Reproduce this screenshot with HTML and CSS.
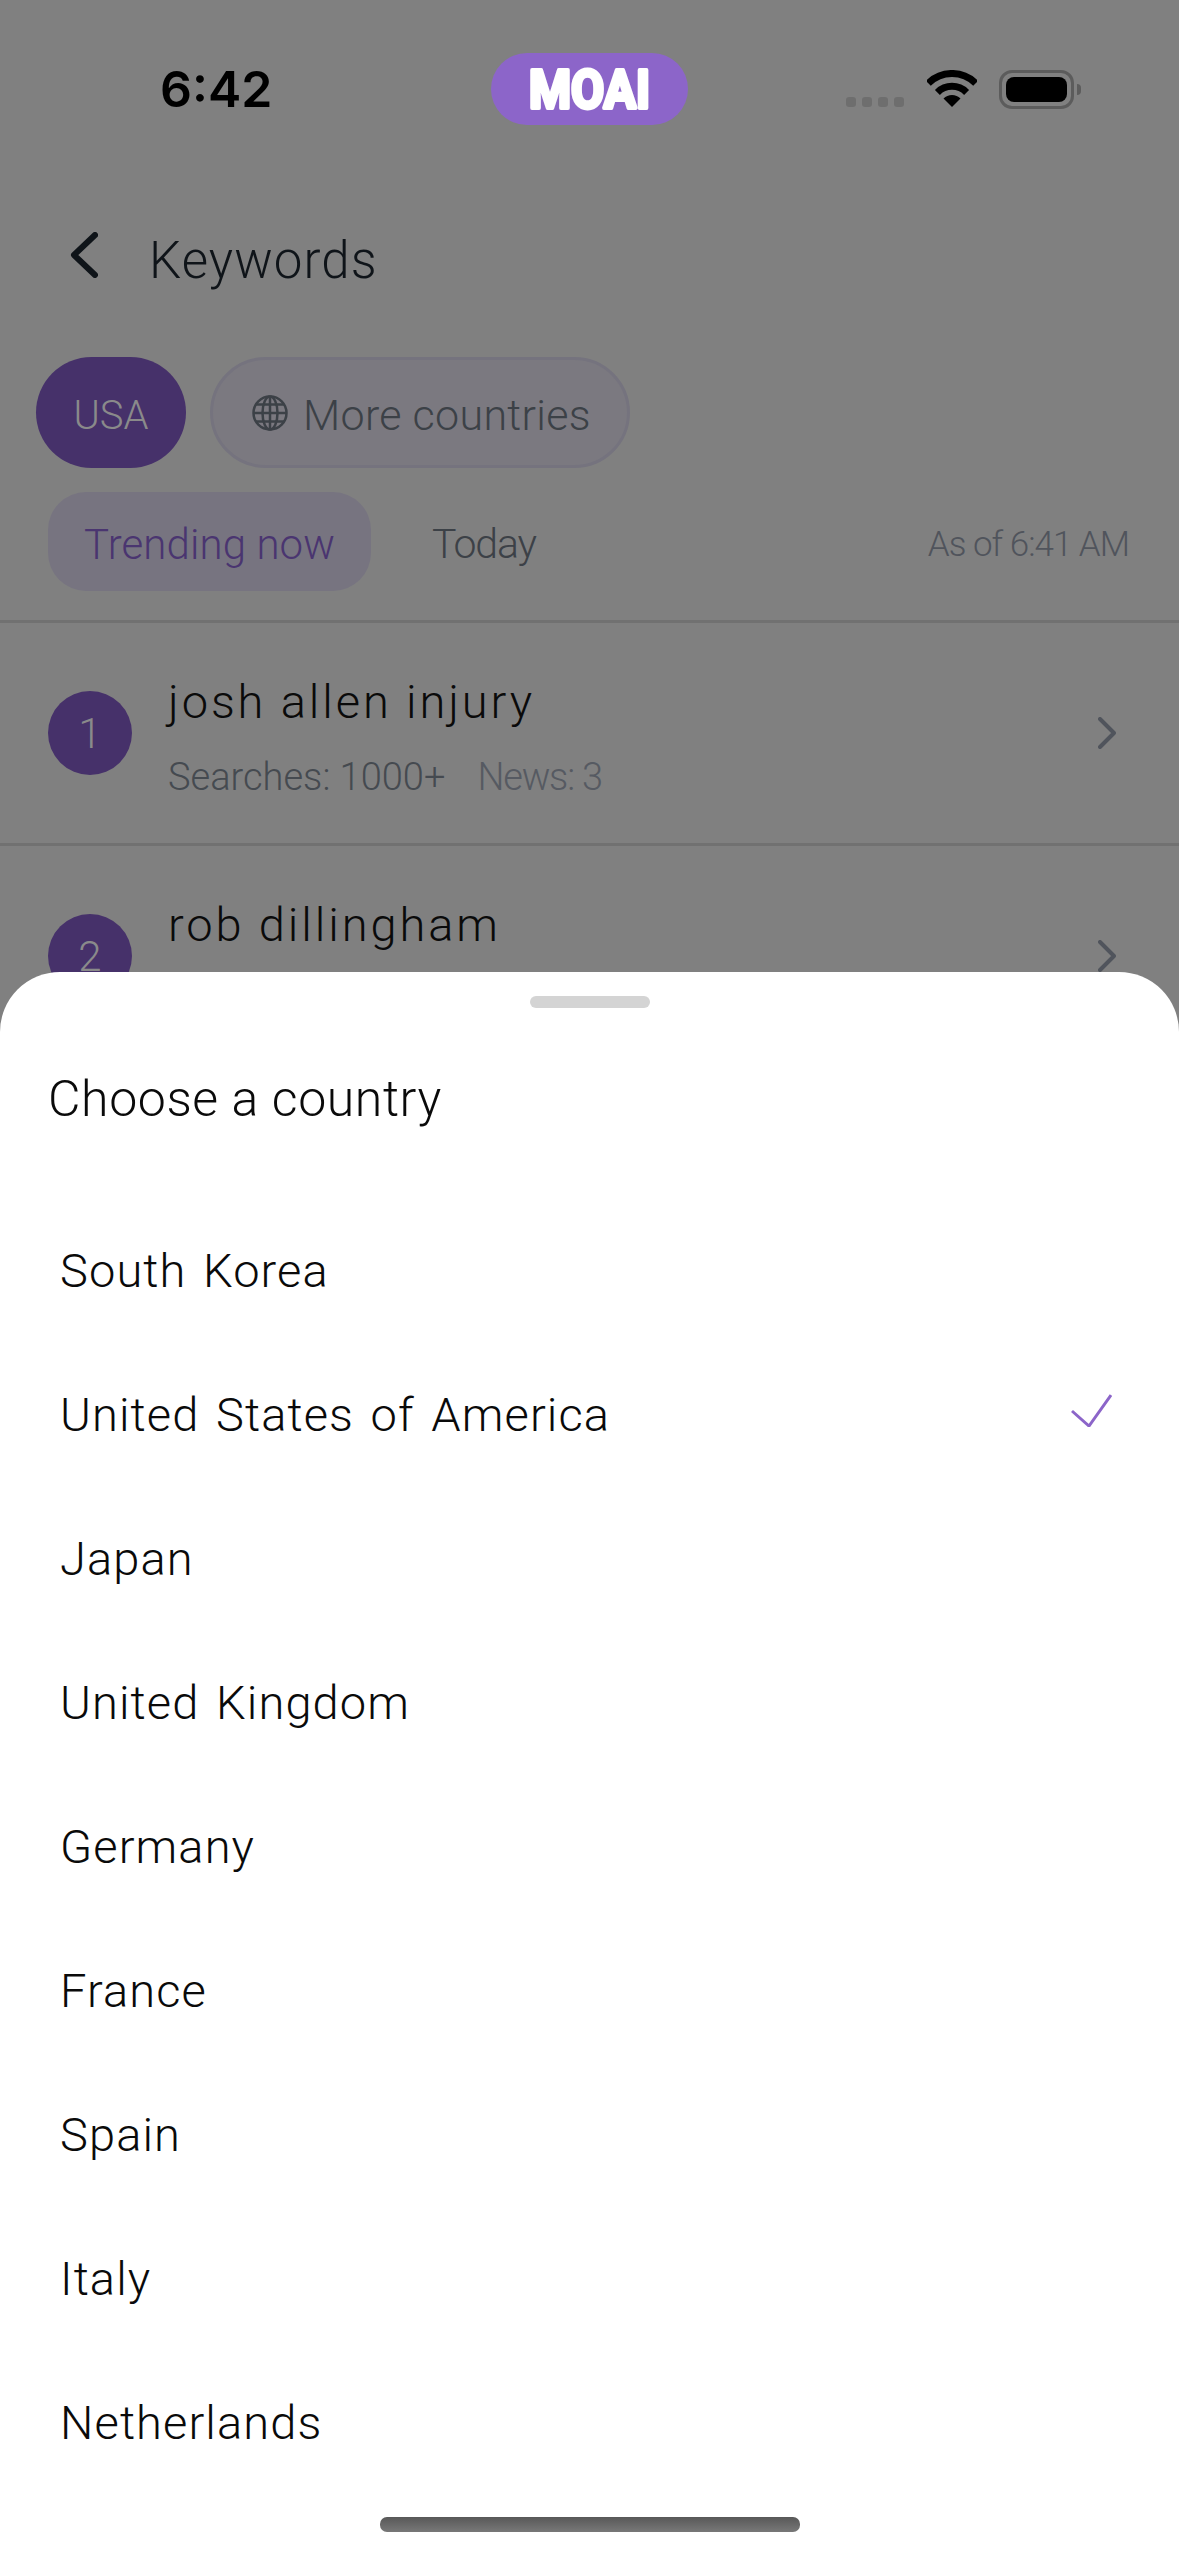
FILE: index.html
```html
<!DOCTYPE html>
<html lang="en">
<head>
    <meta charset="UTF-8">
    <title>Keywords</title>
    <link rel="stylesheet" href="styles.css">
</head>
<body>
    <div class="screen">
        <div class="status">
            <div class="status-time">6:42</div>
            <div class="moai">
                <svg width="125" height="42" viewBox="0 0 125 42"><text x="2" y="40" textLength="121" lengthAdjust="spacingAndGlyphs">MOAI</text></svg>
            </div>
            <div class="status-icons">
                <div class="dots"><span></span><span></span><span></span><span></span></div>
                <svg class="wifi" width="50" height="37" viewBox="0 0 50 37">
                    <path d="M1.3 13.3A33.5 33.5 0 0 1 48.7 13.3" fill="none" stroke="#000" stroke-width="7"/>
                    <path d="M10.4 22.4A20.7 20.7 0 0 1 39.6 22.4" fill="none" stroke="#000" stroke-width="7"/>
                    <path d="M25 37L16.5 28.5A12 12 0 0 1 33.5 28.5Z" fill="#000"/>
                </svg>
                <div class="battery"><div class="battery-level"></div></div>
                <div class="battery-nub"></div>
            </div>
        </div>

        <div class="nav">
            <svg width="28" height="46" viewBox="0 0 28 46"><path d="M25 3L4 23L25 43" fill="none" stroke="#0f1419" stroke-width="6" stroke-linecap="round" stroke-linejoin="round"/></svg>
            <h1>Keywords</h1>
        </div>

        <div class="countries">
            <div class="pill pill-active"><span class="pill-label">USA</span></div>
            <div class="pill pill-more">
                <svg width="36" height="36" viewBox="0 0 36 36" fill="none" stroke="#3c4147" stroke-width="2.5">
                    <circle cx="18" cy="18" r="16.5"/>
                    <ellipse cx="18" cy="18" rx="7.5" ry="16.5"/>
                    <path d="M18 1.5V34.5M1.5 18H34.5M4 9.5H32M4 26.5H32"/>
                </svg>
                <span class="pill-label">More countries</span>
            </div>
        </div>

        <div class="tabs">
            <div class="tab tab-active"><span class="tab-label">Trending now</span></div>
            <div class="tab tab-today"><span class="tab-label">Today</span></div>
            <div class="as-of"><span class="tab-label">As of 6:41 AM</span></div>
        </div>

        <div class="row">
            <div class="rank">1</div>
            <div class="row-text">
                <div class="row-title">josh allen injury</div>
                <div class="row-sub"><span>Searches: 1000+</span><span class="news">News: 3</span></div>
            </div>
            <svg class="chev" width="18" height="32" viewBox="0 0 18 32"><path d="M2 2L16 16L2 30" fill="none" stroke="#50545c" stroke-width="4" stroke-linecap="round" stroke-linejoin="round"/></svg>
        </div>
        <div class="row">
            <div class="rank">2</div>
            <div class="row-text">
                <div class="row-title">rob dillingham</div>
            </div>
            <svg class="chev" width="18" height="32" viewBox="0 0 18 32"><path d="M2 2L16 16L2 30" fill="none" stroke="#50545c" stroke-width="4" stroke-linecap="round" stroke-linejoin="round"/></svg>
        </div>

        <div class="sheet">
            <div class="handle"></div>
            <h2>Choose a country</h2>
            <ul class="country-list">
                <li>South Korea</li>
                <li>United States of America
                    <svg class="check" width="41" height="33" viewBox="0 0 41 33"><path d="M1 17L18 32L40 1" fill="none" stroke="#8c65c9" stroke-width="3"/></svg>
                </li>
                <li>Japan</li>
                <li>United Kingdom</li>
                <li>Germany</li>
                <li>France</li>
                <li>Spain</li>
                <li>Italy</li>
                <li>Netherlands</li>
            </ul>
            <div class="home-bar"></div>
        </div>
    </div>
</body>
</html>
```

FILE: styles.css
```css
* { box-sizing: border-box; }
body { margin: 0; font-family: Roboto, "Noto Sans", sans-serif; background-color: #808080; }
.screen { position: relative; width: 1179px; height: 2556px; overflow: hidden; background-color: #808080; }

.status { display: flex; align-items: center; height: 72px; margin-top: 53px; }
.status-time { width: 491px; padding-left: 160px; font-family: Inter, sans-serif; font-size: 50px; font-weight: 600; color: #000; }
.moai { display: flex; align-items: center; justify-content: center; width: 197px; height: 72px; border-radius: 36px; background-color: #8c65c9; }
.moai svg { overflow: visible; }
.moai text { font-family: Roboto, sans-serif; font-size: 54px; font-weight: 700; fill: #fff; stroke: #fff; stroke-width: 4; stroke-linejoin: round; }
.status-icons { display: flex; align-items: center; margin-left: 158px; }
.dots { display: flex; gap: 6px; margin-top: 26px; }
.dots span { width: 10px; height: 10px; border-radius: 3px; background-color: #6e6e6e; }
.wifi { margin-left: 23px; margin-top: -1px; }
.battery { width: 75px; height: 39px; margin-left: 22px; padding: 4px; border: 3px solid #5c5c5c; border-radius: 13px; }
.battery-level { width: 100%; height: 100%; background-color: #000; border-radius: 8px; }
.battery-nub { width: 4px; height: 11px; margin-left: 3px; background-color: #5c5c5c; border-radius: 0 4px 4px 0; }

.nav { display: flex; align-items: center; gap: 51px; height: 60px; margin-top: 100px; padding-left: 70px; }
h1 { margin: 10px 0 0; font-size: 51px; font-weight: 350; letter-spacing: 1.1px; color: #0f1419; }

.countries { display: flex; gap: 24px; margin-top: 72px; padding-left: 36px; }
.pill { display: flex; align-items: center; height: 111px; border-radius: 56px; }
.pill-label { padding-top: 5px; }
.pill-active { justify-content: center; width: 150px; background-color: #46316a; color: #8a8a8a; font-size: 40px; font-weight: 300; }
.pill-more { gap: 15px; width: 420px; padding-left: 39px; background-color: #7b7980; border: 3px solid #75737e; color: #3c4147; font-size: 43px; font-weight: 350; letter-spacing: 0.3px; }

.tabs { display: flex; align-items: center; height: 99px; margin-top: 24px; padding: 0 50px 0 48px; }
.tab-label { padding-top: 5px; }
.tab { display: flex; font-size: 42px; font-weight: 350; color: #3c4147; }
.tab-active { align-items: center; height: 99px; padding: 0 36px; border-radius: 38px; background-color: #777480; color: #4a3570; letter-spacing: 0.1px; }
.tab-today { margin-left: 61px; font-size: 41px; letter-spacing: -1.1px; }
.as-of { display: flex; margin-left: auto; font-size: 35px; font-weight: 350; letter-spacing: -1px; color: #50545c; }

.row { display: flex; align-items: center; height: 223px; padding: 0 63px 0 48px; border-top: 3px solid #717171; }
.tabs + .row { margin-top: 29px; }
.rank { display: flex; align-items: center; justify-content: center; width: 84px; height: 84px; border-radius: 50%; background-color: #46316a; color: #8a8a8a; font-size: 42px; font-weight: 300; }
.row-text { flex: 1; align-self: flex-start; margin-left: 36px; padding-top: 51px; }
.row-title { font-size: 47px; font-weight: 350; letter-spacing: 2.9px; color: #0a0a0a; }
.row-sub { margin-top: 26px; font-size: 38px; font-weight: 350; color: #454a50; }
.news { margin-left: 32px; letter-spacing: -1.2px; color: #565a62; }

.sheet { position: absolute; left: 0; right: 0; top: 972px; bottom: 0; padding-top: 24px; background-color: #fff; border-radius: 60px 60px 0 0; }
.handle { width: 120px; height: 12px; margin: 0 auto; border-radius: 6px; background-color: #d4d4d4; }
h2 { margin: 61px 0 0 48px; font-size: 50px; line-height: 60px; font-weight: 350; letter-spacing: 0.6px; color: #0a0a0a; }
.country-list { list-style: none; margin: 69px 0 0; padding: 0; }
.country-list li { display: flex; align-items: center; justify-content: space-between; height: 144px; padding: 0 67px 0 60px; font-size: 47px; font-weight: 350; letter-spacing: 1.1px; word-spacing: 4px; color: #0a0a0a; }
.check { margin-bottom: 8px; }
.home-bar { position: absolute; left: 380px; top: 1545px; width: 420px; height: 15px; border-radius: 7px; background: linear-gradient(#585858, #787878); }
```
